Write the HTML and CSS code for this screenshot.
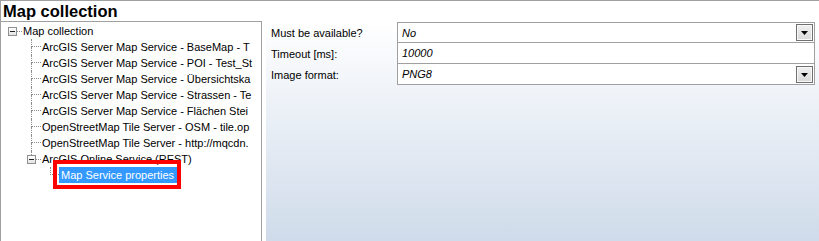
FILE: index.html
```html
<!DOCTYPE html>
<html>

<head>
  <title>Map collection</title>
  <link rel="stylesheet" href="styles.css">
</head>

<body>
  <div class="window">
    <div class="title">Map collection</div>
    <div class="main">
      <div class="tree">
        <div class="node">
          <span class="cell branch">
            <span class="stub"></span>
            <span class="boxrow"><span class="toggle"></span><span class="hline"></span></span>
          </span>
          <span class="text">Map collection</span>
        </div>
        <div class="node">
          <span class="cell"></span>
          <span class="cell tee"><span class="top"></span><span class="bottom"></span></span>
          <span class="text">ArcGIS Server Map Service - BaseMap - T</span>
        </div>
        <div class="node">
          <span class="cell"></span>
          <span class="cell tee"><span class="top"></span><span class="bottom"></span></span>
          <span class="text">ArcGIS Server Map Service - POI - Test_St</span>
        </div>
        <div class="node">
          <span class="cell"></span>
          <span class="cell tee"><span class="top"></span><span class="bottom"></span></span>
          <span class="text">ArcGIS Server Map Service - Übersichtska</span>
        </div>
        <div class="node">
          <span class="cell"></span>
          <span class="cell tee"><span class="top"></span><span class="bottom"></span></span>
          <span class="text">ArcGIS Server Map Service - Strassen - Te</span>
        </div>
        <div class="node">
          <span class="cell"></span>
          <span class="cell tee"><span class="top"></span><span class="bottom"></span></span>
          <span class="text">ArcGIS Server Map Service - Flächen Stei</span>
        </div>
        <div class="node">
          <span class="cell"></span>
          <span class="cell tee"><span class="top"></span><span class="bottom"></span></span>
          <span class="text">OpenStreetMap Tile Server - OSM - tile.op</span>
        </div>
        <div class="node">
          <span class="cell"></span>
          <span class="cell tee"><span class="top"></span><span class="bottom"></span></span>
          <span class="text">OpenStreetMap Tile Server - http://mqcdn.</span>
        </div>
        <div class="node">
          <span class="cell"></span>
          <span class="cell branch">
            <span class="stub line"></span>
            <span class="boxrow"><span class="toggle"></span><span class="hline"></span></span>
          </span>
          <span class="text">ArcGIS Online Service (REST)</span>
        </div>
        <div class="node">
          <span class="cell"></span>
          <span class="cell"></span>
          <span class="cell elbow"><span class="top"></span></span>
          <span class="text selected">Map Service properties</span>
        </div>
      </div>

      <div class="props">
        <div class="grid">
          <div class="label">Must be available?</div>
          <div class="value first">
            <span>No</span>
            <span class="drop"><svg width="7" height="4" viewBox="0 0 7 4"><path d="M0 0h7L3.5 4z" fill="#000"/></svg></span>
          </div>
          <div class="label">Timeout [ms]:</div>
          <div class="value">
            <span>10000</span>
          </div>
          <div class="label">Image format:</div>
          <div class="value">
            <span>PNG8</span>
            <span class="drop"><svg width="7" height="4" viewBox="0 0 7 4"><path d="M0 0h7L3.5 4z" fill="#000"/></svg></span>
          </div>
        </div>
      </div>
    </div>
  </div>
</body>

</html>
```

FILE: styles.css
```css
body {
  margin: 0;
  font-family: "Liberation Sans", Arial, sans-serif;
  font-size: 11px;
  color: #000;
  background: #fff;
}

.window {
  height: 241px;
  box-sizing: border-box;
  border-top: 1px solid #a0a0a0;
  border-left: 1px solid #a0a0a0;
  display: flex;
  flex-direction: column;
  overflow: hidden;
}

.title {
  height: 20px;
  line-height: 20px;
  padding-left: 2px;
  font-size: 16.5px;
  font-weight: bold;
}

.main {
  flex: 1;
  display: flex;
  min-height: 0;
}

/* tree */

.tree {
  width: 258px;
  flex: none;
  border-top: 1px solid #a0a0a0;
  border-right: 1px solid #a0a0a0;
  padding: 1px 0 0 2px;
  overflow: hidden;
}

.node {
  display: flex;
  height: 16px;
  align-items: center;
  white-space: nowrap;
}

.cell {
  width: 19px;
  height: 16px;
  flex: none;
  display: flex;
  flex-direction: column;
}

.tee .top,
.elbow .top {
  margin-left: 9px;
  height: 8px;
  box-sizing: border-box;
  border-left: 1px dotted #8a8a8a;
  border-bottom: 1px dotted #8a8a8a;
}

.tee .bottom {
  margin-left: 9px;
  height: 8px;
  border-left: 1px dotted #8a8a8a;
}

.elbow {
  width: 18px;
}

.stub {
  height: 4px;
  margin-left: 9px;
}

.stub.line {
  border-left: 1px dotted #8a8a8a;
}

.boxrow {
  display: flex;
  align-items: center;
  height: 9px;
  padding-left: 5px;
}

.toggle {
  width: 9px;
  height: 9px;
  box-sizing: border-box;
  border: 1px solid #8e8f8f;
  background: linear-gradient(#fff, #e3e3e3);
  display: flex;
  align-items: center;
  justify-content: center;
}

.toggle::before {
  content: "";
  width: 5px;
  height: 1px;
  background: #222;
}

.hline {
  width: 5px;
  border-top: 1px dotted #8a8a8a;
}

.text {
  margin-left: 1px;
  line-height: 16px;
}

.selected {
  position: relative;
  margin-left: 0;
  padding: 0 4px 0 2px;
  background: #3399ff;
  color: #fff;
}

.selected::after {
  content: "";
  position: absolute;
  left: -6px;
  right: -3px;
  top: -7px;
  bottom: -6px;
  border: 4px solid #f00;
}

/* property grid */

.props {
  flex: 1;
  margin-left: 4px;
  padding: 1px 4px 0 0;
  background: linear-gradient(#fff, #cfdbea);
}

.grid {
  display: grid;
  grid-template-columns: 131px 1fr;
  grid-template-rows: 21px 21px 21px;
}

.label {
  display: flex;
  align-items: center;
  padding-left: 5px;
}

.value {
  display: flex;
  align-items: center;
  box-sizing: border-box;
  padding-left: 4px;
  border: 1px solid #a0a0a0;
  border-top: 0;
  background: #fff;
  font-style: italic;
}

.value.first {
  border-top: 1px solid #a0a0a0;
}

.drop {
  width: 17px;
  height: 17px;
  box-sizing: border-box;
  margin-left: auto;
  margin-right: 1px;
  border: 1px solid #707070;
  box-shadow: inset 0 0 0 1px #f8f8f8;
  background: linear-gradient(#f0f0f0, #d8d8d8);
  display: flex;
  align-items: center;
  justify-content: center;
  padding-top: 1px;
}

.drop svg {
  display: block;
}
```
